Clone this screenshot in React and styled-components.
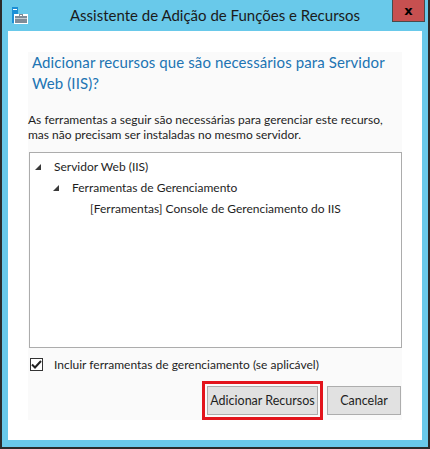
import React, {useState} from "react";
import styled, {createGlobalStyle} from "styled-components";

const GlobalStyle = createGlobalStyle`
    * {
        box-sizing: border-box;
    }

    body {
        margin: 0;
        font-family: Lato, "Open Sans", sans-serif;
    }
`

const Janela = styled.div`
    width: 430px;
    height: 449px;
    background-color: #69c9ea;
    border: 2px solid #2b2b2b;
    border-top: none;
    display: flex;
    flex-direction: column;
`

const BarraTitulo = styled.div`
    height: 31px;
    display: grid;
    grid-template-columns: 40px 1fr 40px;
    align-items: start;
`

const Icone = styled.div`
    padding: 7px 0 0 8px;
    line-height: 0;
`

const Titulo = styled.h1`
    margin: 0;
    padding-top: 6px;
    font-size: 15px;
    font-weight: 400;
    color: #1b1b1b;
    text-align: center;
    white-space: nowrap;
`

const Fechar = styled.button`
    justify-self: end;
    margin-right: 3px;
    width: 33px;
    height: 22px;
    padding: 0;
    background-color: #c75050;
    border: 1px solid #4a4a4a;
    border-top: none;
    color: #000;
    font-family: "DejaVu Sans", sans-serif;
    font-size: 13px;
    font-weight: 700;
    line-height: 18px;
`

const Cliente = styled.div`
    flex: 1;
    margin: 0 6px 7px 6px;
    background-color: #fff;
    padding: 21px 20px 20px 20px;
    display: flex;
`

const Painel = styled.div`
    flex: 1;
    background-color: #fafafa;
    display: flex;
    flex-direction: column;
`

const Cabecalho = styled.h2`
    margin: 0;
    padding-left: 4px;
    font-size: 15px;
    font-weight: 400;
    line-height: 21px;
    color: #2174b3;
    white-space: nowrap;
    letter-spacing: 0.1px;
`

const Texto = styled.p`
    margin: 18px 0 0 0;
    font-size: 12px;
    line-height: 15px;
    color: #1e1e1e;
    white-space: nowrap;
`

const Arvore = styled.div`
    margin: 10px 0 0 1px;
    height: 196px;
    background-color: #fff;
    border: 1px solid #acacac;
    padding: 3px 0 0 5px;
`

const Linha = styled.div`
    display: flex;
    align-items: center;
    height: 21px;
    padding-left: ${props => props.$nivel * 18}px;
    font-size: 12px;
    color: #1e1e1e;
    white-space: nowrap;
`

const Seta = styled.span`
    width: 19px;
    flex-shrink: 0;
    line-height: 0;
`

const LinhaCheck = styled.label`
    margin: 9px 0 0 2px;
    display: flex;
    align-items: center;
    gap: 11px;
    font-size: 12px;
    color: #1e1e1e;
    cursor: pointer;
`

const Caixa = styled.span`
    width: 13px;
    height: 13px;
    border: 1px solid #333;
    background-color: #fff;
    display: flex;
    align-items: center;
    justify-content: center;
`

const Rodape = styled.div`
    margin-top: auto;
    display: flex;
    justify-content: flex-end;
    align-items: center;
    gap: 4px;
    padding-right: 1px;
`

const Destaque = styled.div`
    border: 3px solid #e3141c;
    padding: 2px;
`

const Botao = styled.button`
    height: 29px;
    width: ${props => props.$largura}px;
    background-color: #e1e1e1;
    border: 1px solid #adadad;
    font-family: Lato, "Open Sans", sans-serif;
    font-size: 12.5px;
    color: #1e1e1e;
    padding: 0;
    display: block;
`

function IconeFuncoes() {
    return (
        <svg width="18" height="18" viewBox="0 0 18 18">
            <rect x="2" y="0" width="6" height="16" fill="#1c8fd6"/>
            <rect x="3" y="2" width="4" height="1" fill="#fff"/>
            <rect x="4" y="7" width="14" height="10" fill="#fff"/>
            <rect x="5" y="9" width="12" height="7" fill="#7f8c98"/>
            <rect x="9" y="7" width="4" height="2" fill="#7f8c98"/>
            <rect x="10" y="8" width="2" height="1" fill="#fff"/>
            <rect x="5" y="11" width="12" height="1" fill="#c5ccd2"/>
        </svg>
    )
}

function Triangulo() {
    return (
        <svg width="6" height="6" viewBox="0 0 6 6">
            <polygon points="6,0 6,6 0,6" fill="#3a3a3a"/>
        </svg>
    )
}

const itens = [
    {nivel: 0, texto: "Servidor Web (IIS)", aberto: true},
    {nivel: 1, texto: "Ferramentas de Gerenciamento", aberto: true},
    {nivel: 2, texto: "[Ferramentas] Console de Gerenciamento do IIS", aberto: false},
]

export default function App() {
    const [incluir, setIncluir] = useState(true)

    return (
        <>
            <GlobalStyle/>
            <Janela>
                <BarraTitulo>
                    <Icone><IconeFuncoes/></Icone>
                    <Titulo>Assistente de Adição de Funções e Recursos</Titulo>
                    <Fechar>x</Fechar>
                </BarraTitulo>
                <Cliente>
                    <Painel>
                        <Cabecalho>
                            Adicionar recursos que são necessários para Servidor
                            <br/>
                            Web (IIS)?
                        </Cabecalho>
                        <Texto>
                            As ferramentas a seguir são necessárias para gerenciar este recurso,
                            <br/>
                            mas não precisam ser instaladas no mesmo servidor.
                        </Texto>
                        <Arvore>
                            {itens.map(item => (
                                <Linha key={item.texto} $nivel={item.nivel}>
                                    <Seta>{item.aberto && <Triangulo/>}</Seta>
                                    {item.texto}
                                </Linha>
                            ))}
                        </Arvore>
                        <LinhaCheck onClick={() => setIncluir(!incluir)}>
                            <Caixa>
                                {incluir &&
                                    <svg width="11" height="9" viewBox="0 0 11 9">
                                        <polyline points="1,4.5 4,7.5 10,1" fill="none" stroke="#222" strokeWidth="2"/>
                                    </svg>
                                }
                            </Caixa>
                            Incluir ferramentas de gerenciamento (se aplicável)
                        </LinhaCheck>
                        <Rodape>
                            <Destaque>
                                <Botao $largura={111}>Adicionar Recursos</Botao>
                            </Destaque>
                            <Botao $largura={74}>Cancelar</Botao>
                        </Rodape>
                    </Painel>
                </Cliente>
            </Janela>
        </>
    )
}
